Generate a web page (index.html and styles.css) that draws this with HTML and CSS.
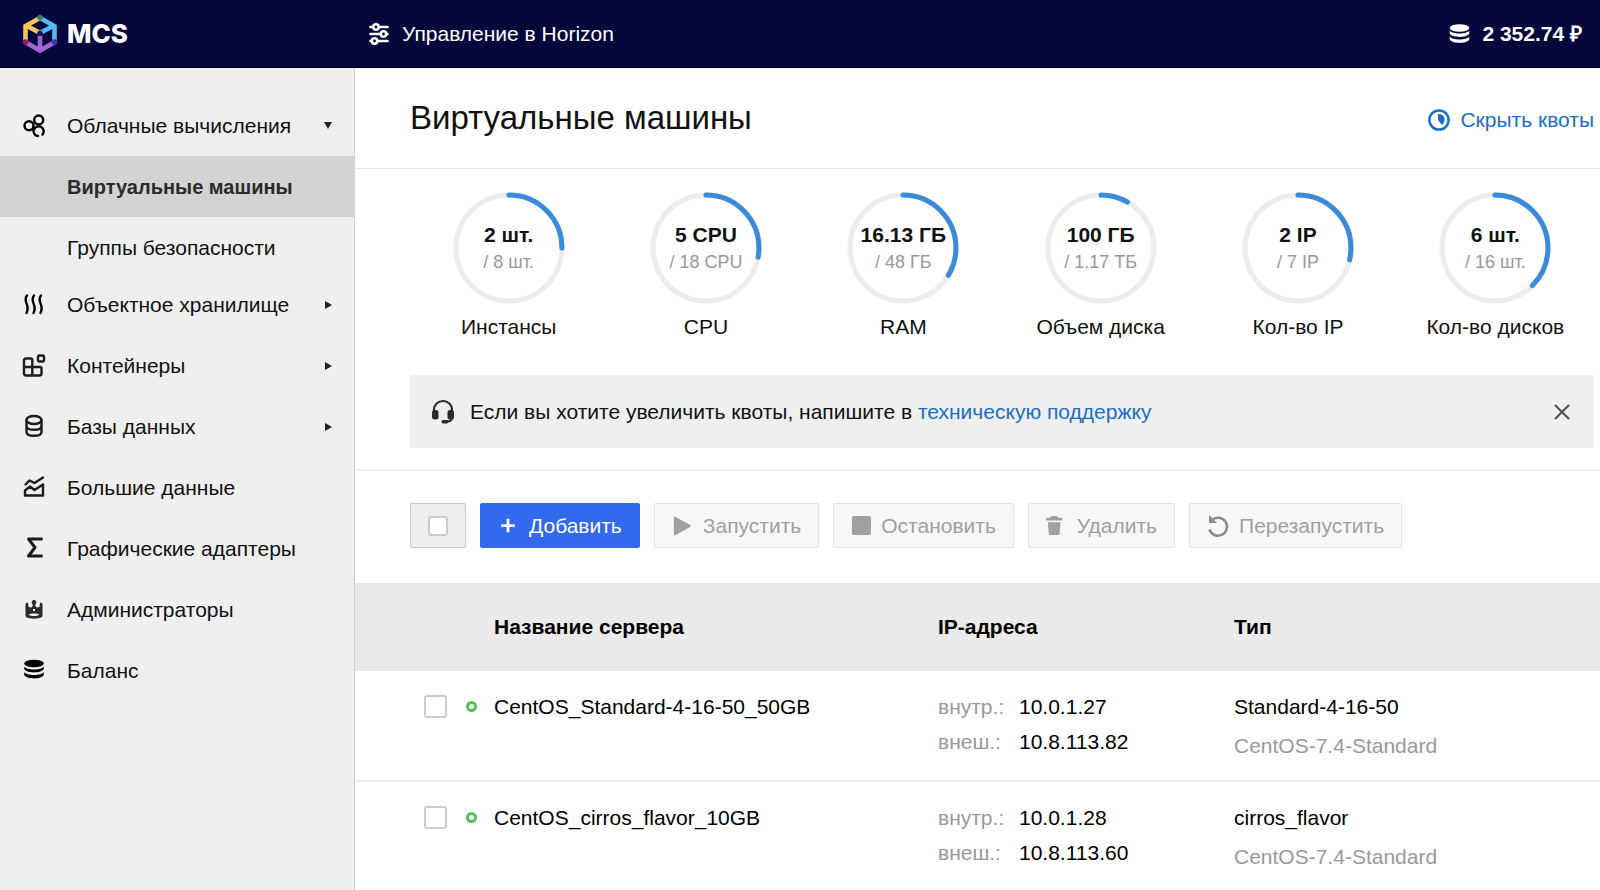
FILE: index.html
```html
<!DOCTYPE html>
<html lang="ru">
<head>
<meta charset="utf-8">
<title>MCS — Виртуальные машины</title>
<link rel="stylesheet" href="styles.css">
</head>
<body>
<header class="topbar">
  <a class="brand" href="#">
    <svg class="brand-logo" viewBox="0 0 36 40" aria-hidden="true">
      <g fill="none" stroke-width="4.6">
        <path stroke="#f5c75a" d="M18 4 3.500 12v16M5 12l13 7"/>
        <path stroke="#55b8f5" d="M18 4l14.500 8v16M31 12l-13 7"/>
        <path stroke="#a366d4" d="M3 28l15 8.500 15-8.500M18 20v16"/>
      </g>
      <circle cx="18" cy="3.500" r="2.800" fill="#2c7d6c"/>
      <circle cx="3.500" cy="28" r="2.800" fill="#8e1f6e"/>
      <circle cx="32.500" cy="28" r="2.800" fill="#4a2fb0"/>
      <circle cx="18" cy="19.500" r="2.800" fill="#1d0f5c"/>
    </svg>
    <span>MCS</span>
  </a>
  <a class="horizon" href="#">
    <svg class="icon-small" viewBox="0 0 22 22" fill="none" stroke="currentColor" stroke-width="2.6" stroke-linecap="round" aria-hidden="true">
      <path d="M2.500 4h2M11 4h8.500M2.500 11h10M19 11h.5M2.500 18h1M10 18h9.500"/>
      <circle cx="8" cy="4" r="2.700"/><circle cx="15.500" cy="11" r="2.700"/><circle cx="6.500" cy="18" r="2.700"/>
    </svg>
    <span>Управление в Horizon</span>
  </a>
  <a class="balance" href="#">
    <svg class="icon-small" viewBox="0 0 22 22" fill="currentColor" aria-hidden="true">
      <ellipse cx="11.500" cy="5" rx="9.800" ry="3.800"/>
      <path d="M1.700 7.500c2 4 17.600 4 19.600 0v3c-2 4.500-17.600 4.500-19.600 0zM1.700 13.500c2 4 17.600 4 19.600 0v3c-2 4.500-17.600 4.500-19.600 0z"/>
    </svg>
    <span>2 352.74 ₽</span>
  </a>
</header>
<div class="layout">
  <nav class="sidebar">
    <a class="nav-item" href="#">
      <svg class="icon icon-dark" viewBox="0 0 24 24" aria-hidden="true"><circle cx="7" cy="11.800" r="4.500"/><circle cx="16.700" cy="6" r="4.500"/><path d="M11.500 12.500v4.500a5 5 0 0 0 4.500 5M20.500 20.500a5 5 0 1 0-8.500-5"/></svg>
      <span>Облачные вычисления</span><i class="caret caret-down"></i>
    </a>
    <div class="subnav">
      <a class="nav-item active" href="#"><span>Виртуальные машины</span></a>
      <a class="nav-item" href="#"><span>Группы безопасности</span></a>
    </div>
    <a class="nav-item" href="#">
      <svg class="icon icon-dark" viewBox="0 0 24 24" aria-hidden="true"><path d="M5 2.500c-5 6 4 9.500-.5 17.500M12 2.500c-5 6 4 9.500-.5 17.500M19 2.500c-5 6 4 9.500-.5 17.500"/></svg>
      <span>Объектное хранилище</span><i class="caret"></i>
    </a>
    <a class="nav-item" href="#">
      <svg class="icon" viewBox="0 0 24 24" aria-hidden="true"><path d="M4 4.500h5q1.300 0 1.300 1.300V21.500H4q-2 0-2-2V6.500q0-2 2-2zM2 13h16q1.500 0 1.500 1.500v5q0 2-2 2H10"/><rect x="16" y="1.500" width="6" height="6" rx="1.500"/></svg>
      <span>Контейнеры</span><i class="caret"></i>
    </a>
    <a class="nav-item" href="#">
      <svg class="icon" viewBox="0 0 24 24" aria-hidden="true"><ellipse cx="12" cy="5" rx="7.500" ry="4"/><path d="M4.500 5v12c0 5 15 5 15 0V5M4.500 11c0 5 15 5 15 0"/></svg>
      <span>Базы данных</span><i class="caret"></i>
    </a>
    <a class="nav-item" href="#">
      <svg class="icon" viewBox="0 0 24 24" aria-hidden="true"><path d="M3.500 8.500l4-4 5 2.500 8.500-5.500M3 19.500V14.500l5-4 4.500 3.500L21 8.500v11z"/></svg>
      <span>Большие данные</span>
    </a>
    <a class="nav-item" href="#">
      <svg class="icon icon-bold" viewBox="0 0 24 24" aria-hidden="true"><path d="M19.500 2H6.500l6.500 8.500-6.500 8.500h13"/></svg>
      <span>Графические адаптеры</span>
    </a>
    <a class="nav-item" href="#">
      <svg class="icon icon-solid" viewBox="0 0 24 24" aria-hidden="true"><path fill-rule="evenodd" d="M3.500 5.500l2.500-1 .5 4.500 3 .5 1.500-2.500-1-1.500a2.300 2.300 0 1 1 4 0l-1 1.500 1.500 2.500 3-.5.5-4.500 2.500 1v12.500c0 3.500-17 3.500-17 0zM11 11v2h2v-2zM6.500 16.500c2 2 9 2 11 0-2-1.500-9-1.500-11 0z"/></svg>
      <span>Администраторы</span>
    </a>
    <a class="nav-item" href="#">
      <svg class="icon icon-solid icon-black" viewBox="0 0 24 24" aria-hidden="true"><ellipse cx="12" cy="4.500" rx="9.800" ry="3.800"/><path d="M2.200 7.500c2 4 17.600 4 19.600 0v2.500c-2 4.500-17.600 4.500-19.600 0zM2.200 13c2 4 17.600 4 19.600 0v3c-2 4.500-17.600 4.500-19.600 0z"/></svg>
      <span>Баланс</span>
    </a>
  </nav>
  <main class="content">
    <div class="page-head">
      <h1>Виртуальные машины</h1>
      <a class="link quota-toggle" href="#">
        <svg class="icon-small" viewBox="0 0 22 22" aria-hidden="true"><circle cx="11" cy="11" r="9.600" fill="none" stroke="currentColor" stroke-width="2.500"/><path fill="currentColor" d="M10 5c8 0 8 7 4 11l-4-5z"/></svg>
        <span>Скрыть квоты</span>
      </a>
    </div>
    <section class="quotas">
      <div class="quota-list">
        <div class="quota"><div class="ring"><svg viewBox="0 0 110 110" aria-hidden="true"><circle class="track" cx="55" cy="55" r="52"/><circle class="value" cx="55" cy="55" r="52" pathLength="100" stroke-dasharray="25 100"/></svg><b>2 шт.</b><small>/ 8 шт.</small></div><span>Инстансы</span></div>
        <div class="quota"><div class="ring"><svg viewBox="0 0 110 110" aria-hidden="true"><circle class="track" cx="55" cy="55" r="52"/><circle class="value" cx="55" cy="55" r="52" pathLength="100" stroke-dasharray="27.800 100"/></svg><b>5 CPU</b><small>/ 18 CPU</small></div><span>CPU</span></div>
        <div class="quota"><div class="ring"><svg viewBox="0 0 110 110" aria-hidden="true"><circle class="track" cx="55" cy="55" r="52"/><circle class="value" cx="55" cy="55" r="52" pathLength="100" stroke-dasharray="33.600 100"/></svg><b>16.13 ГБ</b><small>/ 48 ГБ</small></div><span>RAM</span></div>
        <div class="quota"><div class="ring"><svg viewBox="0 0 110 110" aria-hidden="true"><circle class="track" cx="55" cy="55" r="52"/><circle class="value" cx="55" cy="55" r="52" pathLength="100" stroke-dasharray="8.300 100"/></svg><b>100 ГБ</b><small>/ 1.17 ТБ</small></div><span>Объем диска</span></div>
        <div class="quota"><div class="ring"><svg viewBox="0 0 110 110" aria-hidden="true"><circle class="track" cx="55" cy="55" r="52"/><circle class="value" cx="55" cy="55" r="52" pathLength="100" stroke-dasharray="28.600 100"/></svg><b>2 IP</b><small>/ 7 IP</small></div><span>Кол-во IP</span></div>
        <div class="quota"><div class="ring"><svg viewBox="0 0 110 110" aria-hidden="true"><circle class="track" cx="55" cy="55" r="52"/><circle class="value" cx="55" cy="55" r="52" pathLength="100" stroke-dasharray="37.500 100"/></svg><b>6 шт.</b><small>/ 16 шт.</small></div><span>Кол-во дисков</span></div>
      </div>
      <div class="notice">
        <svg class="notice-icon" viewBox="0 0 24 24" aria-hidden="true"><path fill="none" stroke="currentColor" stroke-width="2.200" d="M3 12V9.500a9 8.500 0 0 1 18 0V17q0 4.500-5 4.500"/><rect x="1" y="10" width="6.500" height="9.500" rx="2.500" fill="currentColor"/><rect x="16.500" y="10" width="6.500" height="9.500" rx="2.500" fill="currentColor"/><rect x="10.500" y="20" width="7" height="3.500" rx="1.700" fill="currentColor"/></svg>
        <p>Если вы хотите увеличить квоты, напишите в <a class="link" href="#">техническую поддержку</a></p>
        <button class="close" type="button" aria-label="Закрыть"><svg viewBox="0 0 16 16" aria-hidden="true"><path d="M1 1l14 14M15 1 1 15"/></svg></button>
      </div>
    </section>
    <div class="toolbar">
      <label class="select-all"><input class="check check-small" type="checkbox" aria-label="Выбрать все"></label>
      <button class="btn btn-primary" type="button"><svg viewBox="0 0 22 22" aria-hidden="true"><path fill="none" stroke="currentColor" stroke-width="3" d="M11 3v15M3.500 10.500h15"/></svg>Добавить</button>
      <button class="btn" type="button" disabled><svg viewBox="0 0 22 22" aria-hidden="true"><path d="M2 2q0-2 2-1l16 9q1.500 1 0 2L4 21q-2 1-2-1z"/></svg>Запустить</button>
      <button class="btn btn-tight" type="button" disabled><svg viewBox="0 0 22 22" aria-hidden="true"><rect x="1" y="0" width="21" height="21" rx="2"/></svg>Остановить</button>
      <button class="btn" type="button" disabled><svg viewBox="0 0 22 22" aria-hidden="true"><path d="M0 3q0-1 1-1h4q0-2 2-2h4q2 0 2 2h4q1 0 1 1v2H0zM2 7h14l-1 12q0 2-2 2H5q-2 0-2-2z"/></svg>Удалить</button>
      <button class="btn btn-tight" type="button" disabled><svg class="restart" viewBox="0 0 22 22" aria-hidden="true"><path fill="none" stroke="currentColor" stroke-width="2.500" d="M5 5a9 9 0 1 1-2.500 9.500"/><path d="M2 0v8h8z"/></svg>Перезапустить</button>
    </div>
    <table class="servers">
      <thead><tr><th class="col-check"></th><th class="col-name">Название сервера</th><th class="col-ip">IP-адреса</th><th>Тип</th></tr></thead>
      <tbody>
        <tr>
          <td><div class="state"><input class="check" type="checkbox" aria-label="CentOS_Standard-4-16-50_50GB"><i class="dot"></i></div></td>
          <td>CentOS_Standard-4-16-50_50GB</td>
          <td><dl class="ips"><dt>внутр.:</dt><dd>10.0.1.27</dd><dt>внеш.:</dt><dd>10.8.113.82</dd></dl></td>
          <td>Standard-4-16-50<div class="image">CentOS-7.4-Standard</div></td>
        </tr>
        <tr>
          <td><div class="state"><input class="check" type="checkbox" aria-label="CentOS_cirros_flavor_10GB"><i class="dot"></i></div></td>
          <td>CentOS_cirros_flavor_10GB</td>
          <td><dl class="ips"><dt>внутр.:</dt><dd>10.0.1.28</dd><dt>внеш.:</dt><dd>10.8.113.60</dd></dl></td>
          <td>cirros_flavor<div class="image">CentOS-7.4-Standard</div></td>
        </tr>
      </tbody>
    </table>
  </main>
</div>
</body>
</html>
```
FILE: styles.css
```css
* { box-sizing: border-box; }
body {
  margin: 0;
  min-height: 100vh;
  display: flex;
  flex-direction: column;
  font: 21px/24px "Liberation Sans", Arial, sans-serif;
  color: #111;
  background: #fff;
}
a { color: inherit; text-decoration: none; }
svg { flex: none; display: block; overflow: visible; }
.link { color: #1b6ec8; }
.icon-small { width: 22px; height: 22px; }

.topbar {
  display: flex;
  align-items: center;
  height: 68px;
  padding: 0 18px 0 22px;
  background: #04063c;
  color: #fff;
  border-bottom: 1px solid #000;
}
.brand {
  width: 346px;
  display: flex;
  align-items: center;
  gap: 9px;
  font: 800 26px/32px Inter, sans-serif;
}
.brand-logo { width: 36px; height: 40px; }
.horizon, .balance { display: flex; align-items: center; gap: 12px; }
.balance { margin-left: auto; font-weight: bold; }

.layout { flex: 1; display: flex; }
.sidebar {
  flex: none;
  width: 355px;
  padding-top: 27px;
  background: #efefef;
  border-right: 1px solid #d2d2d2;
}
.nav-item {
  display: flex;
  align-items: center;
  gap: 21px;
  height: 61px;
  padding: 0 22px;
}
.subnav { margin-bottom: -4px; }
.subnav .nav-item { padding-left: 67px; }
.nav-item.active { background: #d3d3d3; font-size: 20px; font-weight: bold; color: #2b2b2b; }
.icon {
  width: 24px;
  height: 24px;
  fill: none;
  stroke: #1c1c1c;
  stroke-width: 2.4;
  stroke-linecap: round;
  stroke-linejoin: round;
}
.icon-dark { stroke: #000; }
.icon-bold { stroke-width: 3; }
.icon-solid { fill: #2b2b2b; stroke: none; }
.icon-black { fill: #000; }
.caret {
  margin-left: auto;
  border: 4px solid transparent;
  border-left: 7px solid #222;
  border-right: 0;
}
.caret-down {
  border: 4px solid transparent;
  border-top: 7px solid #222;
  border-bottom: 0;
}

.content { flex: 1; min-width: 0; }
.page-head {
  display: flex;
  align-items: center;
  justify-content: space-between;
  height: 101px;
  padding: 0 6px 0 55px;
  border-bottom: 1px solid #e8e8e8;
}
h1 { margin: 0; font-size: 33px; line-height: 40px; font-weight: normal; }
.quota-toggle { display: flex; align-items: center; gap: 10px; padding-top: 4px; }

.quotas { padding: 23px 6px 21px 55px; border-bottom: 2px solid #efefef; }
.quota-list { display: grid; grid-template-columns: repeat(6, 1fr); }
.quota { display: flex; flex-direction: column; align-items: center; gap: 11px; }
.ring {
  display: grid;
  width: 112px;
  height: 112px;
  justify-items: center;
  align-content: center;
  gap: 3px;
}
.ring svg {
  grid-area: 1 / 1 / 3 / 2;
  place-self: center;
  width: 112px;
  height: 112px;
  margin: -60px 0;
  fill: none;
}
.ring b, .ring small { grid-column: 1; white-space: nowrap; }
.ring b { grid-row: 1; }
.ring small { grid-row: 2; font-size: 18px; color: #999; }
.track { stroke: #ececec; stroke-width: 5; }
.value {
  stroke: #3a8bdc;
  stroke-width: 5;
  stroke-linecap: round;
  transform: rotate(-90deg);
  transform-origin: center;
}
.notice {
  display: flex;
  align-items: center;
  margin-top: 36px;
  height: 73px;
  padding: 0 24px 0 21px;
  background: #efefef;
  border-radius: 2px;
}
.notice-icon { width: 24px; height: 24px; margin-right: 15px; color: #2b2b2b; }
.notice p { margin: 0; }
.close { margin-left: auto; padding: 0; border: 0; background: none; }
.close svg { width: 16px; height: 16px; stroke: #555; stroke-width: 2.2; }

.toolbar { display: flex; flex-wrap: wrap; gap: 14px; padding: 32px 55px 35px; }
.select-all, .btn {
  display: flex;
  align-items: center;
  justify-content: center;
  height: 45px;
  border: 1px solid #e3e3e3;
  border-radius: 2px;
}
.select-all { width: 56px; background: #efefef; border-color: #c8c8c8; }
.btn {
  gap: 11px;
  padding: 0 17px;
  font: inherit;
  background: #f7f7f7;
  color: #a0a0a0;
}
.btn svg { width: 20px; height: 20px; fill: currentColor; }
.btn .restart { width: 22px; height: 22px; color: #8c8c8c; }
.btn-tight { gap: 10px; }
.btn-primary { background: #3369ed; border-color: #3369ed; color: #fff; }
.check {
  appearance: none;
  width: 23px;
  height: 23px;
  margin: 0;
  background: #fff;
  border: 2px solid #ccc;
  border-radius: 3px;
}
.check-small { width: 20px; height: 20px; }

.servers { width: 100%; border-collapse: collapse; table-layout: fixed; color: #000; }
.servers th { height: 88px; padding: 0; text-align: left; background: #eaeaea; }
.servers td { padding: 24px 0 22px; vertical-align: top; border-bottom: 2px solid #efefef; }
.servers tbody tr:last-child td { border-bottom: 0; }
.servers .col-check { width: 139px; }
.servers .col-name { width: 444px; }
.servers .col-ip { width: 296px; }
.state { display: flex; align-items: center; gap: 19px; padding-left: 69px; }
.dot { width: 11px; height: 11px; border: 3px solid #4fc05a; border-radius: 50%; }
.ips { display: grid; grid-template-columns: 81px 1fr; row-gap: 11px; margin: 0; }
.ips dt { color: #999; }
.ips dd { margin: 0; }
.image { margin-top: 15px; color: #999; }
```
